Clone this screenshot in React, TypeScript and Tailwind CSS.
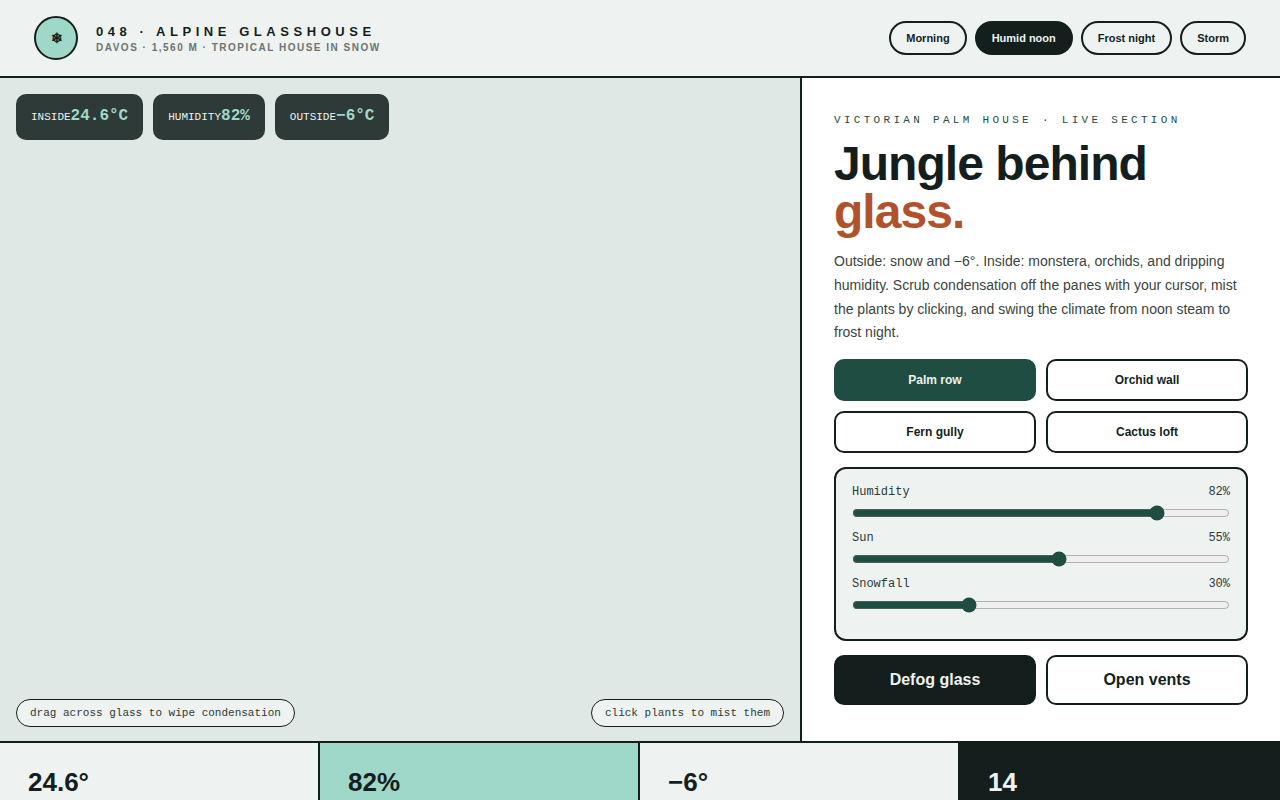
import React from "react";

const sans = "font-['Liberation_Sans',Arial,sans-serif]";
const mono = "font-['Liberation_Mono','Courier_New',monospace]";

function Chip({ label, value }: { label: string; value: string }) {
  return (
    <div className={`flex items-center h-[46px] px-[15px] rounded-[10px] bg-[#2d3a37] ${mono}`}>
      <span className="text-[11px] uppercase text-[#eef2f1] mt-[1px]">{label}</span>
      <span className="text-[16px] font-bold text-[#9fd8c8] -mt-[2px]">{value}</span>
    </div>
  );
}

function Hint({ children }: { children: string }) {
  return (
    <div className={`h-[28px] flex items-center px-[13px] rounded-full border border-[#141f1d] bg-[#eef2f1] text-[11px] text-[#2d3a37] ${mono}`}>
      {children}
    </div>
  );
}

function Range({ label, value }: { label: string; value: number }) {
  return (
    <div className={`flex flex-col ${mono}`}>
      <div className="flex justify-between text-[12px] leading-[14px] text-[#2d3a37]">
        <span>{label}</span>
        <span>{value}%</span>
      </div>
      <input
        type="range"
        min={0}
        max={100}
        defaultValue={value}
        className="block w-full h-[8px] mt-[10px] mb-[14px] accent-[#1f4d42]"
      />
    </div>
  );
}

export default function App() {
  const modes = ["Morning", "Humid noon", "Frost night", "Storm"];
  const zones = ["Palm row", "Orchid wall", "Fern gully", "Cactus loft"];
  return (
    <div className={`h-[800px] w-[1280px] overflow-hidden flex flex-col bg-white text-[#141f1d] ${sans}`}>
      <header className="h-[78px] shrink-0 flex items-center justify-between px-[34px] border-b-2 border-[#141f1d] bg-[#eef2f1]">
        <div className="flex items-center gap-[18px]">
          <div className="w-[44px] h-[44px] rounded-full border-2 border-[#141f1d] bg-[#9fd8c8] flex items-center justify-center text-[14px] font-bold pt-[1px] pl-[1px]">
            ❄
          </div>
          <div className="flex flex-col pt-[2px]">
            <div className="text-[13px] leading-[15px] font-bold tracking-[0.35em]">048 · ALPINE GLASSHOUSE</div>
            <div className="text-[10px] leading-[12px] mt-[3px] font-bold tracking-[0.15em] text-[#6b7573]">
              DAVOS · 1,560 M · TROPICAL HOUSE IN SNOW
            </div>
          </div>
        </div>
        <nav className="flex items-center gap-[8px]">
          {modes.map((m) => (
            <button
              key={m}
              className={`h-[34px] px-[15px] rounded-full border-2 border-[#141f1d] text-[11px] font-bold ${
                m === "Humid noon" ? "bg-[#141f1d] text-[#eef2f1]" : "bg-transparent text-[#141f1d]"
              }`}
            >
              {m}
            </button>
          ))}
        </nav>
      </header>

      <main className="h-[663px] shrink-0 flex">
        <section className="w-[802px] shrink-0 border-r-2 border-[#141f1d] bg-[#e0e8e5] flex flex-col justify-between pt-[16px] pl-[16px] pr-[16px] pb-[14px]">
          <div className="flex gap-[10px]">
            <Chip label="Inside" value="24.6°C" />
            <Chip label="Humidity" value="82%" />
            <Chip label="Outside" value="−6°C" />
          </div>
          <div className="flex justify-between">
            <Hint>drag across glass to wipe condensation</Hint>
            <Hint>click plants to mist them</Hint>
          </div>
        </section>

        <section className="flex-1 flex flex-col px-[32px] pt-[36px]">
          <div className={`text-[11px] leading-[13px] tracking-[0.3em] text-[#1f4d42] ${mono}`}>
            VICTORIAN PALM HOUSE · LIVE SECTION
          </div>
          <h1 className="mt-[13px] text-[48px] leading-[48px] font-bold tracking-[-0.02em]">
            Jungle behind
            <br />
            <span className="text-[#b0532d]">glass.</span>
          </h1>
          <p className="mt-[14px] text-[14px] leading-[23.8px] text-[#3a4441]">
            Outside: snow and −6°. Inside: monstera, orchids, and dripping humidity. Scrub condensation off the panes
            with your cursor, mist the plants by clicking, and swing the climate from noon steam to frost night.
          </p>
          <div className="mt-[14px] grid grid-cols-2 gap-[10px]">
            {zones.map((z) => (
              <button
                key={z}
                className={`h-[42px] rounded-[10px] border-2 text-[12px] font-bold ${
                  z === "Palm row"
                    ? "bg-[#1f4d42] border-[#1f4d42] text-[#eef2f1]"
                    : "bg-white border-[#141f1d] text-[#141f1d]"
                }`}
              >
                {z}
              </button>
            ))}
          </div>
          <div className="mt-[14px] h-[174px] rounded-[12px] border-2 border-[#141f1d] bg-[#eef2f1] px-[16px] pt-[16px]">
            <Range label="Humidity" value={82} />
            <Range label="Sun" value={55} />
            <Range label="Snowfall" value={30} />
          </div>
          <div className="mt-[14px] grid grid-cols-2 gap-[10px]">
            <button className="h-[50px] rounded-[10px] border-2 border-[#141f1d] bg-[#141f1d] text-[#eef2f1] text-[16px] font-bold">
              Defog glass
            </button>
            <button className="h-[50px] rounded-[10px] border-2 border-[#141f1d] bg-white text-[#141f1d] text-[16px] font-bold">
              Open vents
            </button>
          </div>
        </section>
      </main>

      <footer className="flex-1 min-h-0 grid grid-cols-4 border-t-2 border-[#141f1d]">
        <div className="border-r-2 border-[#141f1d] bg-[#eef2f1] pl-[28px] pt-[24px] text-[26px] leading-[30px] font-bold">24.6°</div>
        <div className="border-r-2 border-[#141f1d] bg-[#9fd8c8] pl-[28px] pt-[24px] text-[26px] leading-[30px] font-bold">82%</div>
        <div className="border-r-2 border-[#141f1d] bg-[#eef2f1] pl-[28px] pt-[24px] text-[26px] leading-[30px] font-bold">−6°</div>
        <div className="bg-[#141f1d] text-[#eef2f1] pl-[28px] pt-[24px] text-[26px] leading-[30px] font-bold">14</div>
      </footer>
    </div>
  );
}
